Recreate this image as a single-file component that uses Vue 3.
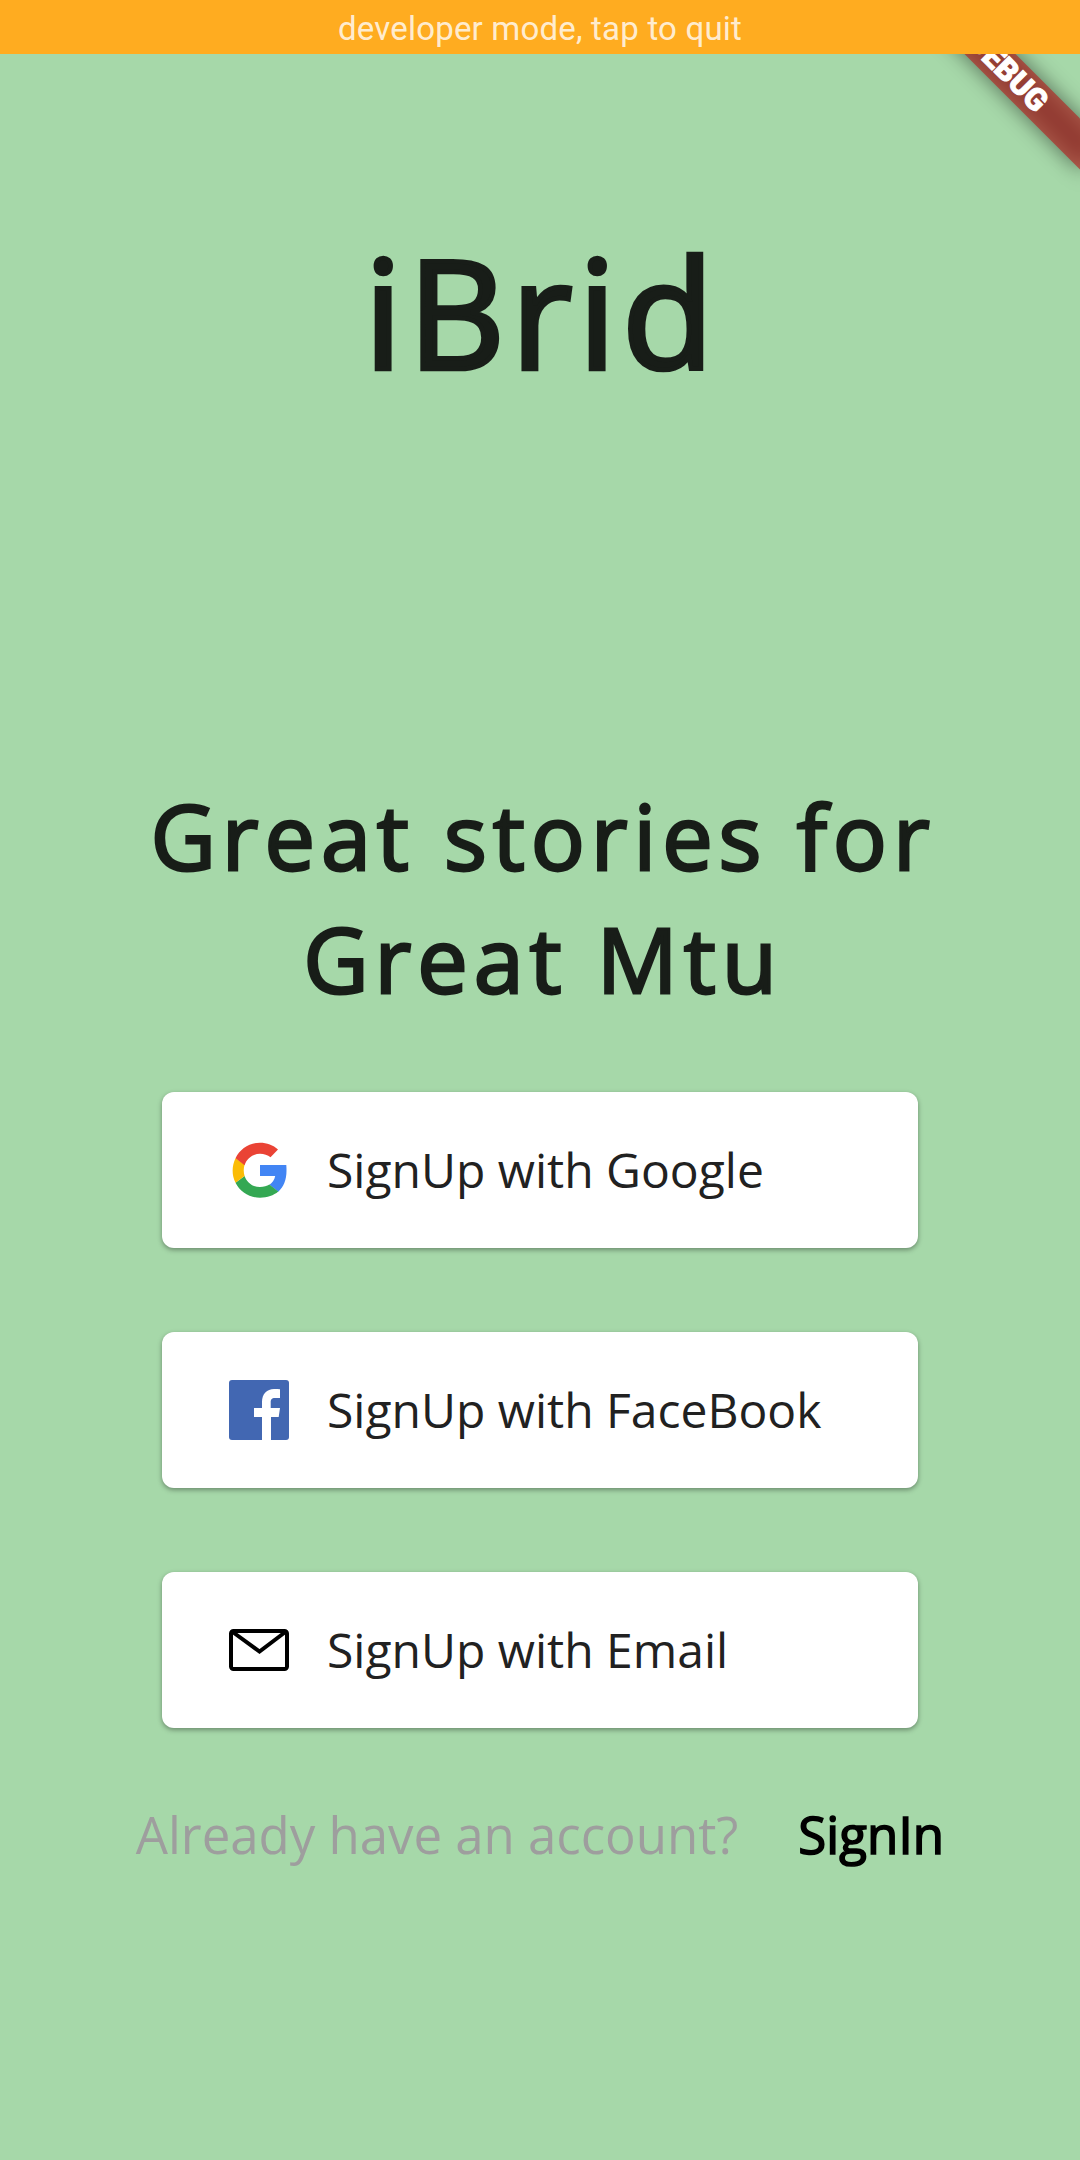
<script setup>
const options = [
  { id: 'google', label: 'SignUp with Google' },
  { id: 'facebook', label: 'SignUp with FaceBook' },
  { id: 'email', label: 'SignUp with Email' },
]
</script>

<template>
  <main class="screen">
    <div class="ribbon"><span>DEBUG</span></div>
    <header class="dev-bar">developer mode, tap to quit</header>
    <h1 class="title">iBrid</h1>
    <h2 class="tagline">Great stories for<br />Great Mtu</h2>
    <div class="options">
      <button v-for="o in options" :key="o.id" class="option">
        <svg v-if="o.id === 'google'" class="icon" viewBox="0 0 60 60">
          <path fill="#4285F4" d="M57.3 25H31v11h15.2c-.8 3.700-2.700 6.700-5.700 8.700l8.800 7C54.500 47 57.500 40 57.500 30.800c0-2 0-3.800-.2-5.800z" />
          <path fill="#34A853" d="M31 57.700c7.400 0 13.700-2.300 18.300-6.200l-8.900-6.900c-2.400 1.600-5.600 2.500-9.400 2.500-7.200 0-13.200-4.700-15.400-11.200l-9.100 6.900C11 51.800 20.300 57.700 31 57.700z" />
          <path fill="#FBBC05" d="M15.600 35.900c-1.100-3.600-1.200-7.700 0-11.500L6.500 18.200c-3.700 7.600-3.900 16.800 0 24.600z" />
          <path fill="#EA4335" d="M31 13.800c4.100 0 7.700 1.400 10.500 3.400l7.500-7.800C44.200 5.100 37.900 2.700 31 2.700 20.300 2.700 11 8.800 6.500 18.200l9.100 7C17.800 18.500 23.800 13.800 31 13.800z" />
        </svg>
        <svg v-else-if="o.id === 'facebook'" class="icon" viewBox="0 0 60 60">
          <rect width="60" height="60" rx="3" fill="#4267B2" />
          <path fill="#fff" d="M33 60V37h-8v-9h8v-6c0-8 5-13 12-13 2.500 0 4.500.1 6 .3V18h-5c-3.500 0-4.300 1.700-4.300 4.500V28H51l-1.300 9H42v23z" />
        </svg>
        <svg v-else class="icon" viewBox="0 0 60 60" fill="none" stroke="#000">
          <rect x="2" y="11" width="56" height="38" rx="2.500" stroke-width="4" />
          <path d="M3 11.500L30.500 31.500 57 11.500" stroke-width="4" />
        </svg>
        <span>{{ o.label }}</span>
      </button>
    </div>
    <p class="signin">
      <span>Already have an account?</span>
      <a>SignIn</a>
    </p>
  </main>
</template>

<style>
body {
  margin: 0;
}
</style>

<style scoped>
.screen {
  position: relative;
  display: flex;
  flex-direction: column;
  align-items: center;
  width: 1080px;
  height: 2160px;
  overflow: hidden;
  background: #a6d8a9;
  font-family: 'Open Sans', sans-serif;
}
.dev-bar {
  position: relative;
  width: 100%;
  height: 54px;
  background: #ffac20;
  color: rgba(255, 255, 255, 0.8);
  font: 33px/57px Roboto, sans-serif;
  letter-spacing: 0.2px;
  text-align: center;
}
.ribbon {
  position: absolute;
  top: 54px;
  left: 888px;
  width: 240px;
  height: 36px;
  transform: rotate(45deg);
}
.ribbon::before {
  content: '';
  position: absolute;
  inset: 0;
  background: rgba(0, 0, 0, 0.5);
  filter: blur(10.9px);
}
.ribbon span {
  position: relative;
  display: block;
  background: rgba(183, 28, 28, 0.627);
  color: #fff;
  font: 900 30.6px/36px Roboto, sans-serif;
  -webkit-text-stroke: 1px #fff;
  text-align: center;
}
.title,
.tagline {
  margin: 0;
  color: #181d18;
  font-weight: 400;
  text-align: center;
}
.title {
  margin-top: 155px;
  padding-left: 4px;
  font-size: 150px;
  line-height: 204px;
  letter-spacing: 6px;
  -webkit-text-stroke: 4.7px #181d18;
}
.tagline {
  margin-top: 361px;
  padding-left: 6px;
  font-size: 90px;
  line-height: 123px;
  letter-spacing: 5.9px;
  -webkit-text-stroke: 2.8px #181d18;
}
.options {
  display: flex;
  flex-direction: column;
  gap: 84px;
  width: 756px;
  margin-top: 72px;
}
.option {
  display: flex;
  align-items: center;
  gap: 38px;
  height: 156px;
  padding: 0 67px;
  border: 0;
  border-radius: 12px;
  background: #fff;
  box-shadow: 0 2px 5px rgba(0, 0, 0, 0.36);
  color: #212121;
  font: 48px/66px 'Open Sans', sans-serif;
  white-space: nowrap;
}
.icon {
  flex: none;
  width: 60px;
  height: 60px;
}
.signin {
  display: flex;
  gap: 60px;
  margin: 71px 0 0;
  font-size: 51px;
  line-height: 70px;
  letter-spacing: -0.04px;
  color: #9e9e9e;
  white-space: nowrap;
}
.signin a {
  color: #000;
  letter-spacing: 0.1px;
  -webkit-text-stroke: 1.6px #000;
}
</style>
